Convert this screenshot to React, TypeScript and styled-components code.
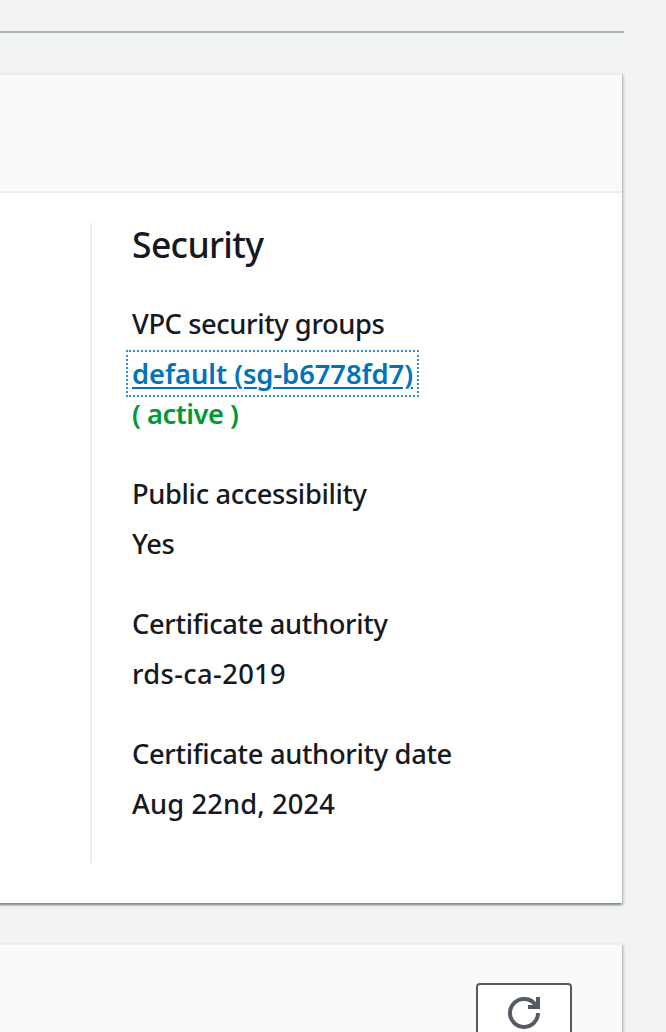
import React from "react";
import styled, { createGlobalStyle } from "styled-components";

const GlobalStyle = createGlobalStyle`
  * { box-sizing: border-box; }
  body {
    margin: 0;
    background: #f2f3f3;
    color: #16191f;
    font-family: "Noto Sans", "Open Sans", sans-serif;
    font-size: 27.3px;
    line-height: 40px;
    overflow: hidden;
  }
`;

const Page = styled.main`
  height: 1032px;
  overflow: hidden;
  padding: 31px 42px 0 0;
`;

const TabsRule = styled.div`
  height: 2px;
  background: #aab7b8;
  margin-bottom: 40px;
`;

const Card = styled.section`
  margin: 0 2px 40px -20px;
  border-top: 2px solid #eaeded;
  background: #fff;
  box-shadow: 0 2px 2px 0 rgba(0, 28, 36, 0.3), 2px 2px 2px 0 rgba(0, 28, 36, 0.15),
    -2px 2px 2px 0 rgba(0, 28, 36, 0.15);
`;

const CardHeader = styled.header`
  display: flex;
  justify-content: flex-end;
  height: 118px;
  padding: 38px 50px 0 0;
  background: #fafafa;
  border-bottom: 2px solid #eaeded;
`;

const CardBody = styled.div`
  padding: 30px 40px 40px 110px;
`;

const Column = styled.div`
  height: 640px;
  padding-left: 40px;
  border-left: 2px solid #eaeded;
`;

const Title = styled.h2`
  margin: 0 0 39px;
  font-size: 35.5px;
  font-weight: 500;
  line-height: 42px;
`;

const Fields = styled.dl`
  display: flex;
  flex-direction: column;
  gap: 40px;
  margin: 0;
  font-weight: 500;
`;

const Label = styled.dt`
  height: 40px;
  margin-bottom: 10px;
`;

const Value = styled.dd`
  margin: 0;
`;

const Text = styled.span<{ $tracking?: number }>`
  letter-spacing: ${(p) => p.$tracking ?? 0}px;
  white-space: pre;
`;

const LinkLine = styled.div`
  height: 40px;
`;

const GroupLink = styled.a`
  display: inline-block;
  padding: 1px 0;
  line-height: 33px;
  color: #0073bb;
  font-weight: 600;
  text-decoration: underline;
  text-decoration-thickness: 2px;
  text-underline-offset: 3px;
  outline: 2px dotted #3391c9;
  outline-offset: 4px;
`;

const Status = styled.div`
  color: #009933;
  font-weight: 600;
`;

const RefreshButton = styled.button`
  display: flex;
  justify-content: center;
  width: 96px;
  height: 64px;
  padding: 12px 0 0;
  border: 2px solid #545b64;
  border-radius: 4px;
  background: #fff;
`;

const fields = [
  { label: "Public accessibility", lt: -0.36, value: "Yes", vt: -0.35 },
  { label: "Certificate authority", lt: -0.33, value: "rds-ca-2019", vt: 0.35 },
  { label: "Certificate authority date", lt: -0.32, value: "Aug 22nd, 2024", vt: 0.12 },
];

export default function App() {
  return (
    <>
      <GlobalStyle />
      <Page>
        <TabsRule />
        <Card>
          <CardHeader />
          <CardBody>
            <Column>
              <Title>
                <Text $tracking={-0.65}>Security</Text>
              </Title>
              <Fields>
                <div>
                  <Label>
                    <Text $tracking={-0.41}>VPC security groups</Text>
                  </Label>
                  <Value>
                    <LinkLine>
                      <GroupLink href="#">
                        <Text $tracking={-0.04}>default (sg-b6778fd7)</Text>
                      </GroupLink>
                    </LinkLine>
                    <Status>
                      <Text $tracking={-0.48}>( active )</Text>
                    </Status>
                  </Value>
                </div>
                {fields.map((f) => (
                  <div key={f.label}>
                    <Label>
                      <Text $tracking={f.lt}>{f.label}</Text>
                    </Label>
                    <Value>
                      <Text $tracking={f.vt}>{f.value}</Text>
                    </Value>
                  </div>
                ))}
              </Fields>
            </Column>
          </CardBody>
        </Card>
        <Card>
          <CardHeader>
            <RefreshButton aria-label="Refresh">
              <svg width="32" height="32" viewBox="0 0 16 16" fill="none" stroke="#545b64" strokeWidth="2">
                <path d="M10 5h5V0" />
                <path d="M15 8a6.957 6.957 0 0 1-7 7 6.957 6.957 0 0 1-7-7 6.957 6.957 0 0 1 7-7 6.87 6.87 0 0 1 6.3 4" />
              </svg>
            </RefreshButton>
          </CardHeader>
        </Card>
      </Page>
    </>
  );
}
